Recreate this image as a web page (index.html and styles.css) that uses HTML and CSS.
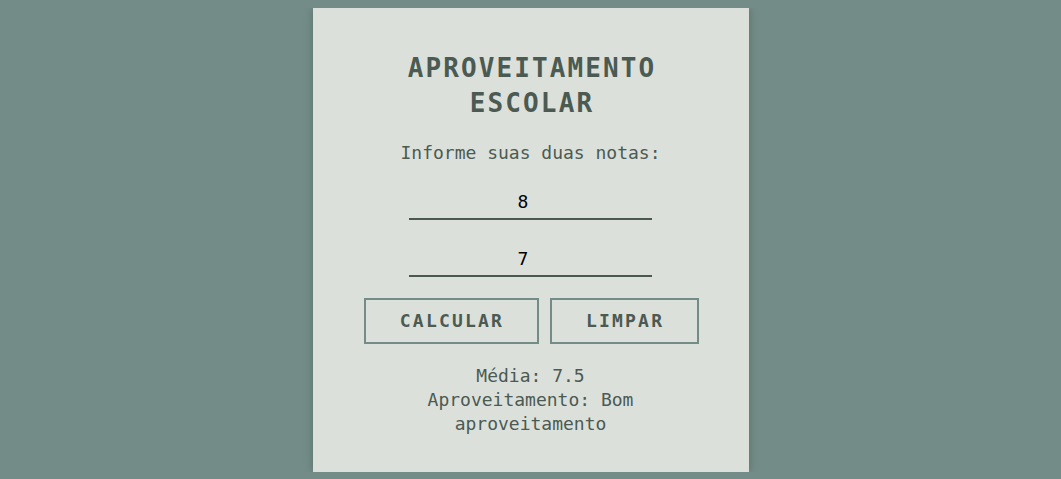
FILE: index.html
```html
<!DOCTYPE html>
<html lang="pt-BR">
<head>
<meta charset="utf-8">
<title>Aproveitamento Escolar</title>
<link rel="stylesheet" href="styles.css">
</head>
<body>
<main class="card">
  <h2 class="title">APROVEITAMENTO ESCOLAR</h2>
  <p class="prompt">Informe suas duas notas:</p>
  <input class="grade" type="number" value="8">
  <input class="grade" type="number" value="7">
  <div class="actions"><button class="btn btn-calc">CALCULAR</button> <button class="btn btn-clear">LIMPAR</button></div>
  <div class="result">
    <div>Média: 7.5</div>
    <div>Aproveitamento: Bom aproveitamento</div>
  </div>
</main>
</body>
</html>
```

FILE: styles.css
```css
html, body {
  background: #748c87;
}
body {
  margin: 8px;
  font-family: "DejaVu Sans Mono", monospace;
  font-size: 18px;
  line-height: 1.35;
  color: #4b5a52;
}
.card {
  width: 436px;
  height: 464px;
  box-sizing: border-box;
  margin: 0 auto;
  padding: 20px 50px;
  background: #dce0db;
  box-shadow: 0 0 8px rgba(40, 60, 55, 0.35);
  display: flex;
  flex-direction: column;
  align-items: center;
  text-align: center;
}
.title {
  margin: 23px 0 20px;
  padding-left: 3px;
  font-size: 26px;
  line-height: 35px;
  letter-spacing: 2.1px;
  font-weight: bold;
  color: #4b5a52;
}
.prompt {
  margin: 0 0 20px;
}
.grade {
  width: 243px;
  box-sizing: border-box;
  padding: 6px 2px;
  margin: 0 0 22px;
  border: none;
  border-bottom: 2px solid #4b5750;
  background: transparent;
  font-family: "DejaVu Sans Mono", monospace;
  font-size: 18px;
  color: #000;
  text-align: center;
  outline: none;
}
.grade:last-of-type {
  margin-bottom: 21px;
}
.actions {
  white-space: nowrap;
  margin-bottom: 20px;
  padding-left: 2px;
}
.btn {
  font-family: "DejaVu Sans Mono", monospace;
  font-size: 18px;
  font-weight: bold;
  letter-spacing: 2.2px;
  line-height: 22px;
  height: 46px;
  box-sizing: border-box;
  color: #4b5a52;
  background: transparent;
  border: 2px solid #748c87;
  padding: 10px 33px 10px 34px;
  margin: 0;
}
.result {
  line-height: 24px;
}
```
